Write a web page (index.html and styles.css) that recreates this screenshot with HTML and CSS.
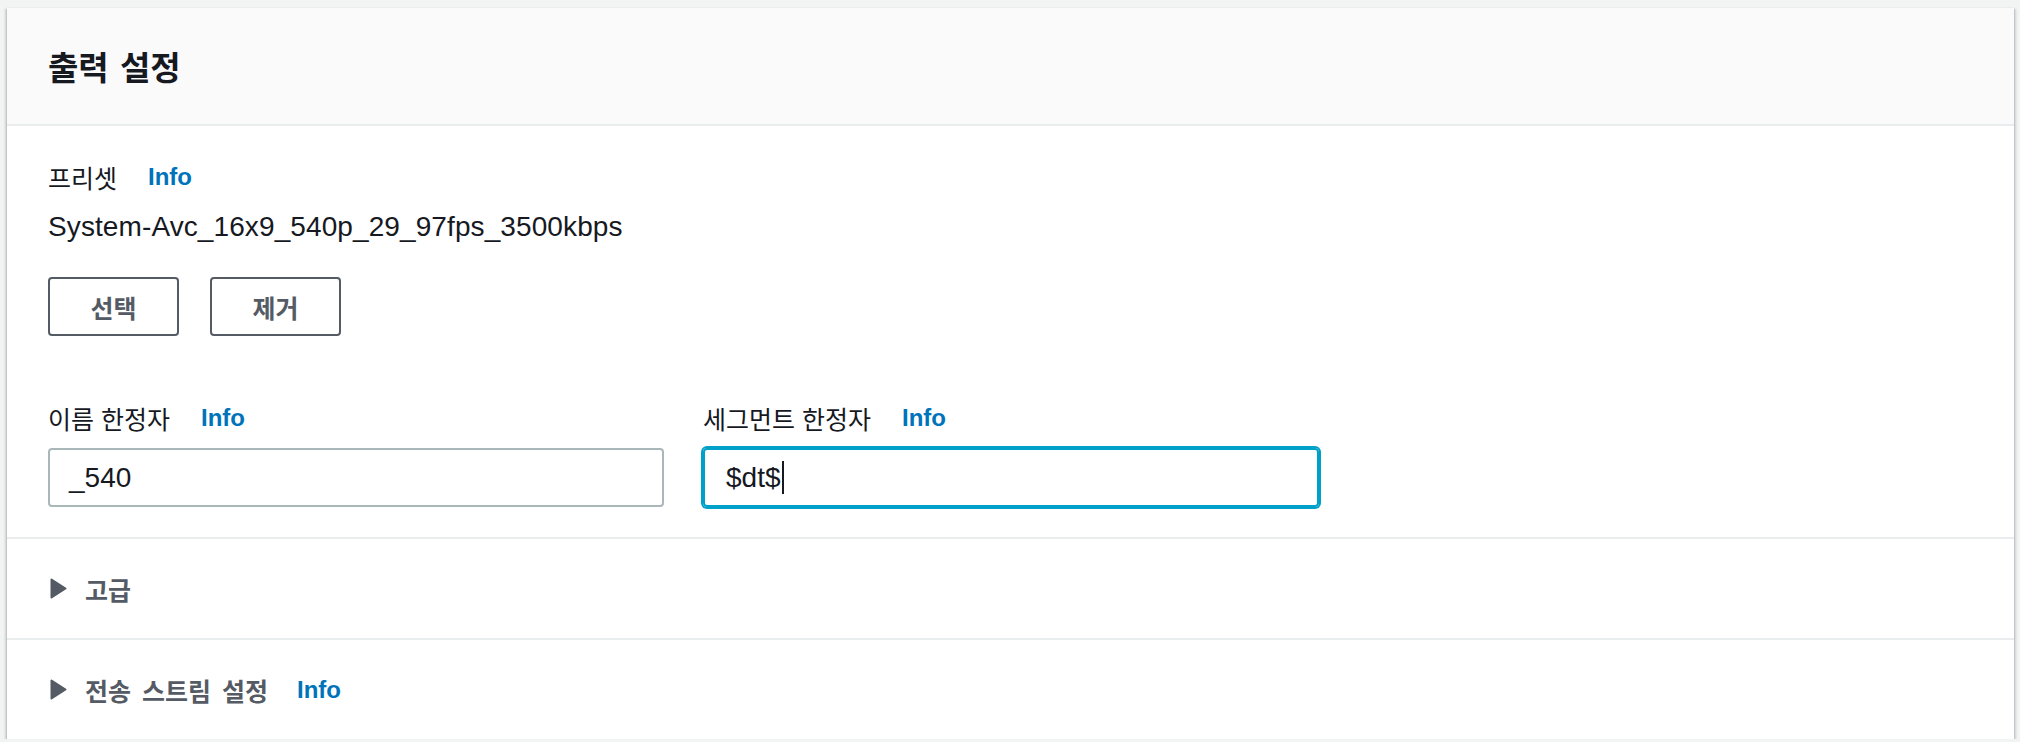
FILE: index.html
```html
<!DOCTYPE html>
<html lang="ko">
<head>
<meta charset="utf-8">
<title>출력 설정</title>
<link rel="stylesheet" href="styles.css">
</head>
<body>
<div class="card">
  <div class="card-header">
    <h2 class="title">출력 설정</h2>
  </div>
  <div class="card-body">
    <div class="label-row">
      <span class="label">프리셋</span>
      <a class="info">Info</a>
    </div>
    <div class="value">System-Avc_16x9_540p_29_97fps_3500kbps</div>
    <div class="buttons">
      <button class="btn">선택</button>
      <button class="btn">제거</button>
    </div>
    <div class="fields">
      <div class="field">
        <div class="label-row">
          <span class="label">이름 한정자</span>
          <a class="info">Info</a>
        </div>
        <div class="input"><span class="input-text">_540</span></div>
      </div>
      <div class="field">
        <div class="label-row">
          <span class="label">세그먼트 한정자</span>
          <a class="info">Info</a>
        </div>
        <div class="input focused"><span class="input-text">$dt$</span><span class="caret"></span></div>
      </div>
    </div>
  </div>
  <div class="expander">
    <svg class="tri" width="17" height="21" viewBox="0 0 17 21"><polygon points="1.5,1.5 15.5,10.5 1.5,19.5" fill="#545b64" stroke="#545b64" stroke-width="2" stroke-linejoin="round"/></svg>
    <span class="exp-label">고급</span>
  </div>
  <div class="expander">
    <svg class="tri" width="17" height="21" viewBox="0 0 17 21"><polygon points="1.5,1.5 15.5,10.5 1.5,19.5" fill="#545b64" stroke="#545b64" stroke-width="2" stroke-linejoin="round"/></svg>
    <span class="exp-label">전송 스트림 설정</span>
    <a class="info exp-info">Info</a>
  </div>
</div>
</body>
</html>
```
FILE: styles.css
```css
html, body {
  margin: 0;
  padding: 0;
}
body {
  background: #f2f3f3;
  padding: 7px 6px 0 7px;
  font-family: "Liberation Sans", Arial, sans-serif;
  color: #16191f;
}
.card {
  background: #ffffff;
  border-top: 1px solid #eaeded;
  box-shadow: 0 2px 1px 0 rgba(0, 28, 36, 0.4), 2px 2px 2px 0 rgba(0, 28, 36, 0.15), -2px 2px 2px 0 rgba(0, 28, 36, 0.15);
}
.card-header {
  height: 116px;
  background: #fafafa;
  border-bottom: 2px solid #eaeded;
  display: flex;
  align-items: center;
  padding-left: 41px;
}
.title {
  margin: 0;
  font-family: "Noto Sans CJK KR", sans-serif;
  font-size: 33px;
  font-weight: 700;
  color: #16191f;
  word-spacing: 2px;
  line-height: 40px;
}
.card-body {
  padding: 31px 41px 30px;
  border-bottom: 2px solid #eaeded;
}
.label-row {
  display: flex;
  align-items: center;
  height: 40px;
}
.label {
  font-family: "Noto Sans CJK KR", sans-serif;
  font-size: 25px;
  line-height: 40px;
  color: #16191f;
  word-spacing: 0;
}
.info {
  margin-left: 31px;
  font-family: "Liberation Sans", Arial, sans-serif;
  font-weight: 700;
  font-size: 24px;
  color: #0073bb;
  line-height: 40px;
}
.exp-info {
  margin-left: 29px;
}
.value {
  margin-top: 10px;
  font-size: 28px;
  letter-spacing: 0.1px;
  line-height: 40px;
  color: #16191f;
}
.buttons {
  margin-top: 30px;
  display: flex;
  gap: 31px;
}
.btn {
  width: 131px;
  height: 59px;
  box-sizing: border-box;
  border: 2px solid #545b64;
  border-radius: 4px;
  background: #ffffff;
  color: #545b64;
  font-family: "Noto Sans CJK KR", sans-serif;
  font-weight: 700;
  font-size: 25px;
  padding: 0;
  display: flex;
  align-items: center;
  justify-content: center;
}
.fields {
  margin-top: 62px;
  display: grid;
  grid-template-columns: 616px 616px;
  column-gap: 39px;
}
.field .label-row {
  margin-bottom: 10px;
}
.input {
  height: 59px;
  box-sizing: border-box;
  border: 2px solid #aab7b8;
  border-radius: 4px;
  padding: 0 19px;
  display: flex;
  align-items: center;
  font-size: 28px;
  color: #16191f;
}
.input.focused {
  border-color: #00a1c9;
  box-shadow: 0 0 0 2px #00a1c9;
  padding-left: 21px;
}
.caret {
  display: inline-block;
  width: 2px;
  height: 33px;
  background: #16191f;
  margin-left: 1px;
}
.expander {
  height: 99px;
  display: flex;
  align-items: center;
  padding-left: 43px;
}
.expander + .expander {
  border-top: 2px solid #eaeded;
}
.tri {
  display: block;
  margin-right: 18px;
}
.exp-label {
  font-family: "Noto Sans CJK KR", sans-serif;
  font-weight: 700;
  font-size: 25px;
  line-height: 40px;
  color: #545b64;
  word-spacing: 4px;
}
```
